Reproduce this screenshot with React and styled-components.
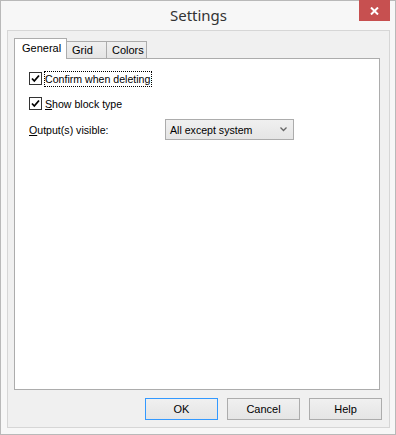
import React from 'react'
import styled, { createGlobalStyle } from 'styled-components'

const Global = createGlobalStyle`
  html, body {
    margin: 0;
    padding: 0;
    background: #ffffff;
  }
  body {
    font-family: "Liberation Sans", Arial, sans-serif;
    font-size: 10.6px;
    color: #000;
  }
`

const Window = styled.div`
  box-sizing: border-box;
  width: 396px;
  height: 435px;
  border: 1px solid #b9b9b9;
  background: #f7f7f7;
  display: flex;
  flex-direction: column;
  padding: 0 5px 6px 6px;
`

const TitleBar = styled.div`
  height: 29px;
  position: relative;
  display: flex;
  align-items: center;
  justify-content: center;
  flex-shrink: 0;
`

const Title = styled.div`
  font-family: "Noto Sans", "Open Sans", sans-serif;
  font-size: 15px;
  color: #333;
  margin-top: -1px;
`

const CloseButton = styled.div`
  position: absolute;
  top: -1px;
  right: 0;
  width: 31px;
  height: 21px;
  background: #c75050;
  display: flex;
  align-items: center;
  justify-content: center;
`

const Client = styled.div`
  flex: 1;
  border: 1px solid #d6d6d6;
  background: #f0f0f0;
  display: flex;
  flex-direction: column;
  padding: 7px 9px 7px 6px;
`

const TabStrip = styled.div`
  display: flex;
  align-items: flex-end;
  height: 21px;
  position: relative;
  z-index: 1;
  margin-bottom: -1px;
`

const Tab = styled.div`
  box-sizing: border-box;
  width: ${p => p.$w}px;
  height: ${p => (p.$active ? 21 : 18)}px;
  border: 1px solid #acacac;
  border-bottom: ${p => (p.$active ? 'none' : '1px solid #acacac')};
  margin-left: ${p => (p.$first ? 0 : -1)}px;
  background: ${p => (p.$active ? '#ffffff' : 'linear-gradient(#f0f0f0, #e5e5e5)')};
  padding: ${p => (p.$active ? '3px 0 0 7px' : '2px 0 0 5px')};
  font-size: 11px;
  position: relative;
  z-index: ${p => (p.$active ? 2 : 1)};
`

const Panel = styled.div`
  flex: 1;
  background: #fff;
  border: 1px solid #acacac;
  padding: 12px 0 0 14px;
  display: flex;
  flex-direction: column;
`

const CheckRow = styled.label`
  display: flex;
  align-items: center;
  height: 15px;
  margin-bottom: ${p => p.$gap}px;
`

const Box = styled.span`
  box-sizing: border-box;
  width: 13px;
  height: 13px;
  border: 1px solid #333;
  background: #fff;
  display: flex;
  align-items: center;
  justify-content: center;
  margin-right: 2px;
`

const Label = styled.span`
  padding: 1px 1px 1px 0;
  border: 1px ${p => (p.$focus ? 'dotted #000' : 'solid transparent')};
  line-height: 12px;
`

const Mnemonic = styled.u`
  text-decoration: underline;
`

const SelectRow = styled.div`
  display: flex;
  align-items: center;
`

const SelectLabel = styled.span`
  width: 136px;
`

const Select = styled.div`
  box-sizing: border-box;
  width: 129px;
  height: 21px;
  border: 1px solid #acacac;
  background: linear-gradient(#f0f0f0, #e5e5e5);
  display: flex;
  align-items: center;
  justify-content: space-between;
  padding: 0 6px 0 4px;
`

const Footer = styled.div`
  display: flex;
  justify-content: flex-end;
  gap: 9px;
  padding-top: 8px;
  margin-right: -2px;
`

const Button = styled.div`
  box-sizing: border-box;
  width: 73px;
  height: 22px;
  border: 1px solid ${p => (p.$default ? '#3399ff' : '#acacac')};
  background: linear-gradient(#f0f0f0, #e5e5e5);
  display: flex;
  align-items: center;
  justify-content: center;
  font-size: 11px;
`

const Check = () => (
  <svg width="9" height="9" viewBox="0 0 9 9">
    <path d="M1 4.5 L3.3 7 L8 1.5" fill="none" stroke="#000" strokeWidth="1.8" />
  </svg>
)

export default function App() {
  return (
    <>
      <Global />
      <Window>
        <TitleBar>
          <Title>Settings</Title>
          <CloseButton>
            <svg width="9" height="8" viewBox="0 0 9 8">
              <path d="M1 0.5 L8 7.5 M8 0.5 L1 7.5" stroke="#fff" strokeWidth="2" />
            </svg>
          </CloseButton>
        </TitleBar>
        <Client>
          <TabStrip>
            <Tab $first $active $w={53}>General</Tab>
            <Tab $w={41}>Grid</Tab>
            <Tab $w={41}>Colors</Tab>
          </TabStrip>
          <Panel>
            <CheckRow $gap={10}>
              <Box><Check /></Box>
              <Label $focus>Confirm when deleting</Label>
            </CheckRow>
            <CheckRow $gap={8}>
              <Box><Check /></Box>
              <Label><Mnemonic>S</Mnemonic>how block type</Label>
            </CheckRow>
            <SelectRow>
              <SelectLabel><Mnemonic>O</Mnemonic>utput(s) visible:</SelectLabel>
              <Select>
                <span>All except system</span>
                <svg width="7" height="5" viewBox="0 0 7 5">
                  <path d="M0.5 0.5 L3.5 3.5 L6.5 0.5" fill="none" stroke="#666" strokeWidth="1.3" />
                </svg>
              </Select>
            </SelectRow>
          </Panel>
          <Footer>
            <Button $default>OK</Button>
            <Button>Cancel</Button>
            <Button>Help</Button>
          </Footer>
        </Client>
      </Window>
    </>
  )
}
